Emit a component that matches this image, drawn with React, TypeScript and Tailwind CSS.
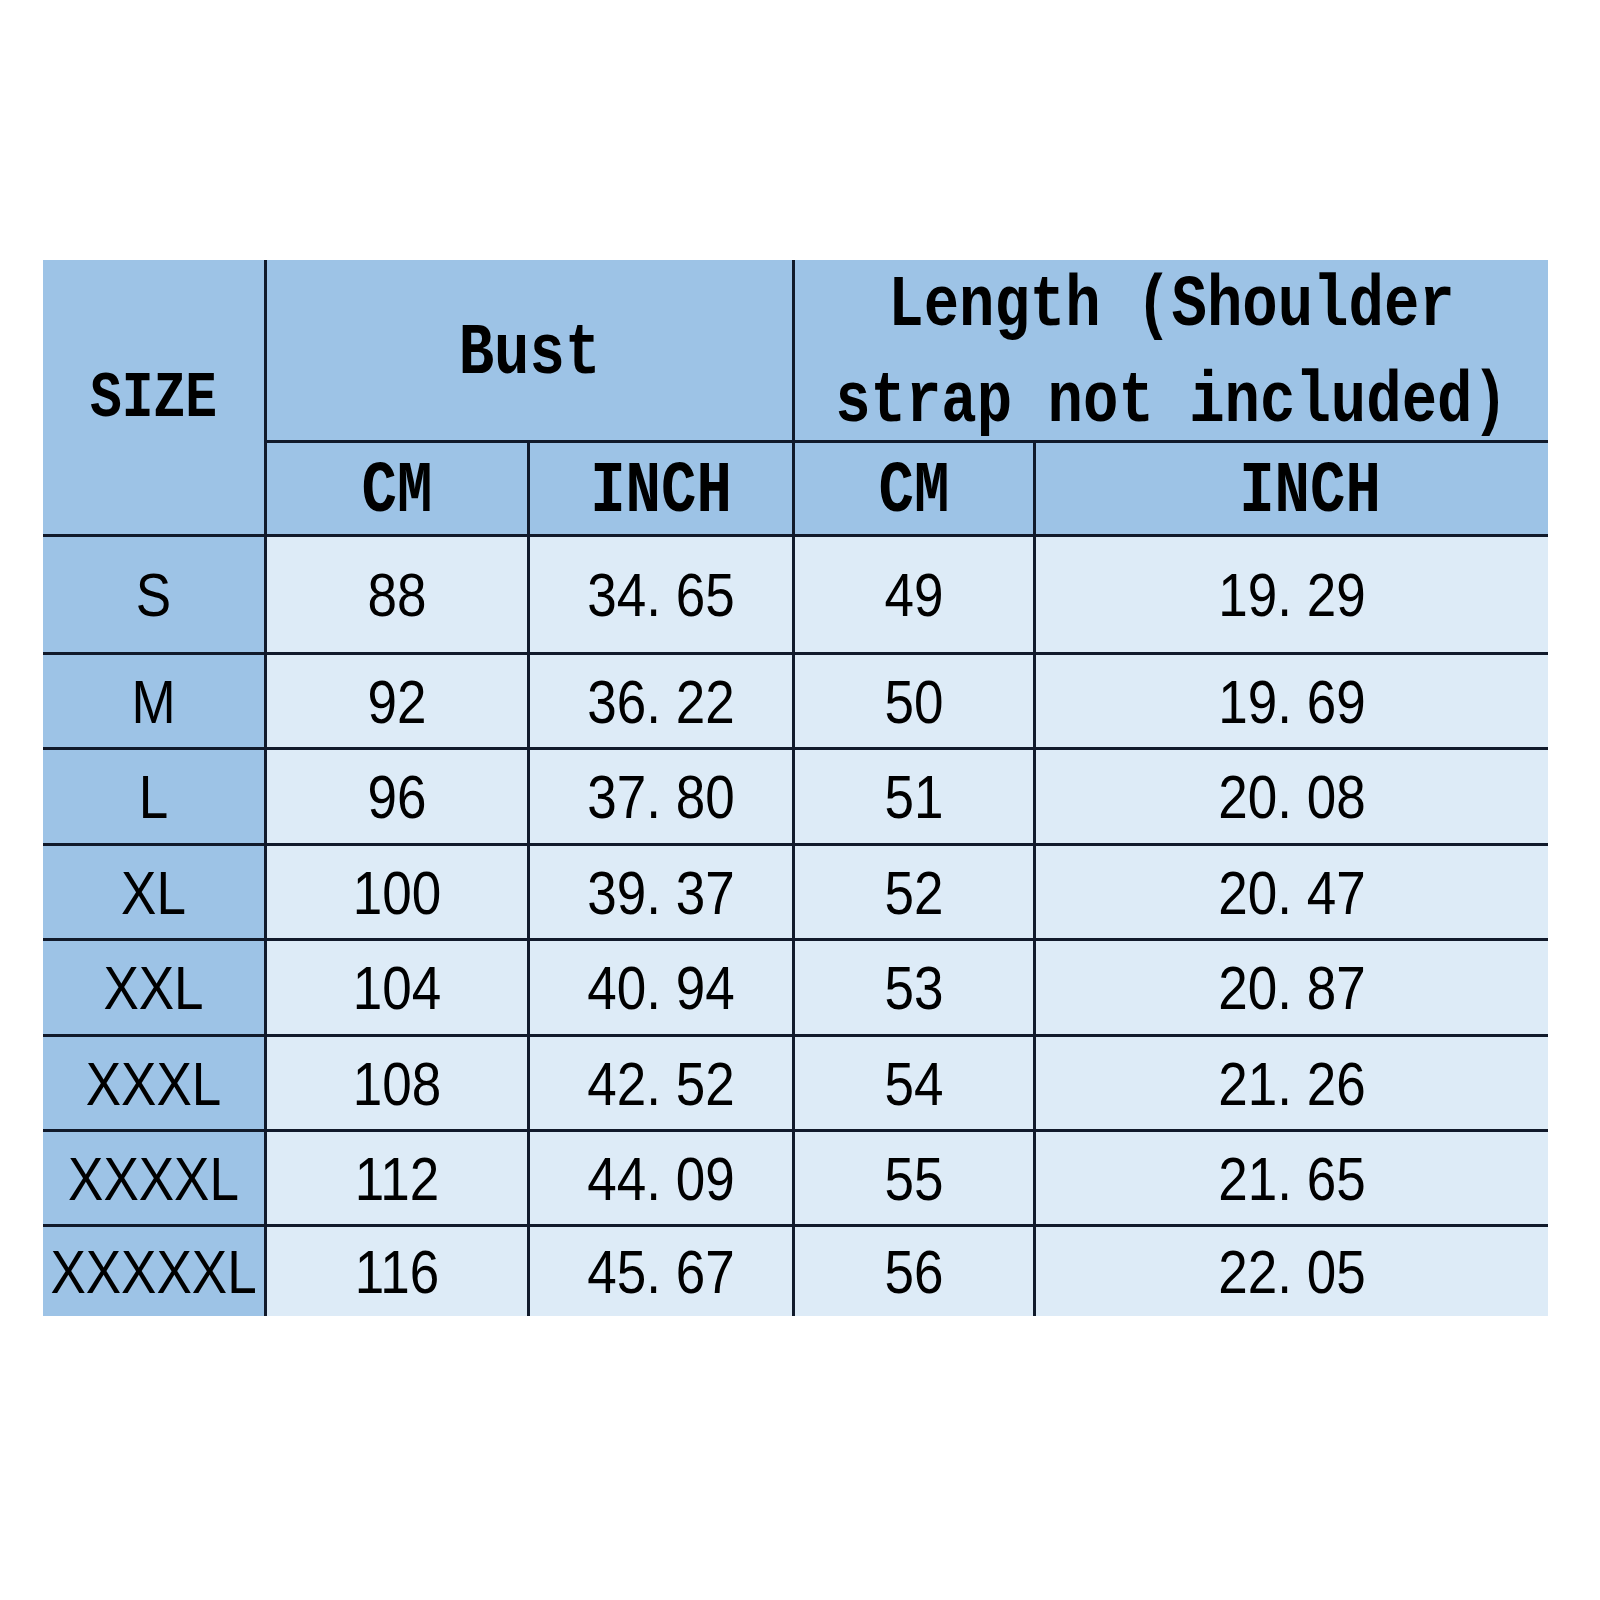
const rows = [
  { size: 'S', bustCm: '88', bustIn: '34. 65', lenCm: '49', lenIn: '19. 29' },
  { size: 'M', bustCm: '92', bustIn: '36. 22', lenCm: '50', lenIn: '19. 69' },
  { size: 'L', bustCm: '96', bustIn: '37. 80', lenCm: '51', lenIn: '20. 08' },
  { size: 'XL', bustCm: '100', bustIn: '39. 37', lenCm: '52', lenIn: '20. 47' },
  { size: 'XXL', bustCm: '104', bustIn: '40. 94', lenCm: '53', lenIn: '20. 87' },
  { size: 'XXXL', bustCm: '108', bustIn: '42. 52', lenCm: '54', lenIn: '21. 26' },
  { size: 'XXXXL', bustCm: '112', bustIn: '44. 09', lenCm: '55', lenIn: '21. 65' },
  { size: 'XXXXXL', bustCm: '116', bustIn: '45. 67', lenCm: '56', lenIn: '22. 05' },
];

const head = 'bg-[#9dc3e6] flex items-center justify-center text-black';
const monoBase = "font-['Liberation_Mono',monospace] font-bold inline-block scale-y-[1.22]";
const mono = `${monoBase} text-[59px]`;
const num = "font-['Liberation_Sans',Arial,sans-serif] text-[53px] leading-none inline-block scale-y-[1.15] text-black";

export default function App() {
  return (
    <div className="min-h-[1600px] w-[1600px] bg-white pt-[260px] pl-[43px]">
      <div className="grid w-fit grid-cols-[221px_260px_262px_238px_512px] grid-rows-[180px_91px_115px_92px_93px_92px_93px_92px_92px_89px] gap-[3px] bg-[#111a2b]">
        <div className={`${head} row-span-2 pt-[6px]`}>
          <span className={`${monoBase} text-[53px]`}>SIZE</span>
        </div>
        <div className={`${head} col-span-2 pt-[10px]`}>
          <span className={mono}>Bust</span>
        </div>
        <div className={`${head} col-span-2 pt-[8px]`}>
          <span className={`${mono} text-center leading-[79px]`}>
            Length (Shoulder
            <br />
            strap not included)
          </span>
        </div>
        <div className={`${head} pt-[10px]`}>
          <span className={mono}>CM</span>
        </div>
        <div className={`${head} pt-[10px]`}>
          <span className={mono}>INCH</span>
        </div>
        <div className={`${head} pt-[10px]`}>
          <span className={mono}>CM</span>
        </div>
        <div className={`${head} pl-[36px] pt-[10px]`}>
          <span className={mono}>INCH</span>
        </div>

        {rows.map((r) => (
          <div key={r.size} className="contents">
            <div className="bg-[#9dc3e6] flex items-center justify-center">
              <span className={num}>{r.size}</span>
            </div>
            <div className="bg-[#ddebf7] flex items-center justify-center">
              <span className={num}>{r.bustCm}</span>
            </div>
            <div className="bg-[#ddebf7] flex items-center justify-center">
              <span className={num}>{r.bustIn}</span>
            </div>
            <div className="bg-[#ddebf7] flex items-center justify-center">
              <span className={num}>{r.lenCm}</span>
            </div>
            <div className="bg-[#ddebf7] flex items-center justify-center">
              <span className={num}>{r.lenIn}</span>
            </div>
          </div>
        ))}
      </div>
    </div>
  );
}
